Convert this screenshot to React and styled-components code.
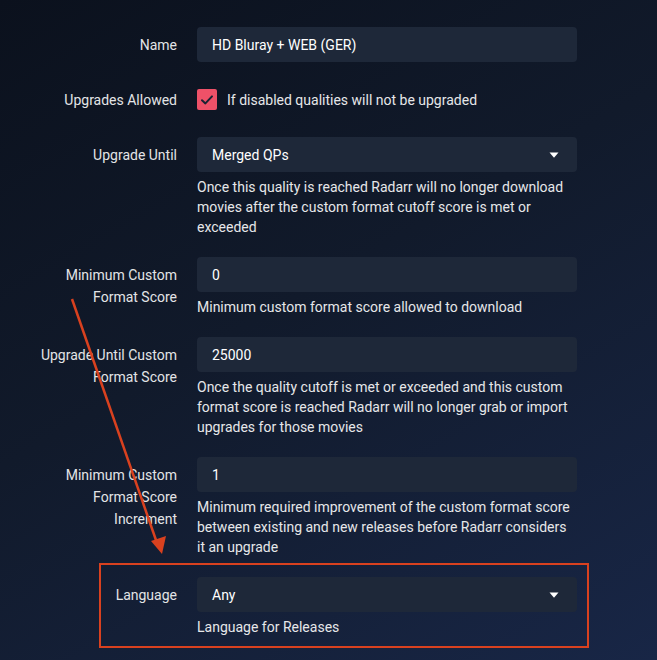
import React from "react";
import styled, { createGlobalStyle } from "styled-components";

const Global = createGlobalStyle`
  html, body { margin: 0; padding: 0; }
  body {
    background: linear-gradient(150deg, #0b111d 0%, #111a2b 45%, #182646 100%);
    min-height: 660px;
    font-family: Roboto, "Noto Sans", sans-serif;
    -webkit-font-smoothing: antialiased;
  }
`;

const Page = styled.div`
  position: relative;
  width: 657px;
  height: 660px;
  overflow: hidden;
  box-sizing: border-box;
  padding-top: 27px;
`;

const Form = styled.div`
  display: flex;
  flex-direction: column;
  gap: 20px;
`;

const Row = styled.div`
  position: relative;
  display: grid;
  grid-template-columns: 177px 380px;
  column-gap: 20px;
  align-items: start;
`;

const Label = styled.div`
  text-align: right;
  color: #e3e4e6;
  font-size: 14px;
  line-height: 22px;
  padding-top: 7px;
`;

const Control = styled.div`
  display: flex;
  flex-direction: column;
`;

const Field = styled.div`
  height: 35px;
  box-sizing: border-box;
  background: #1e2839;
  border-radius: 4px;
  display: flex;
  align-items: center;
  justify-content: space-between;
  padding: 0 18px 0 15px;
  color: #ffffff;
  font-size: 14px;
`;

const Help = styled.div`
  margin-top: 5px;
  color: #e6e7e9;
  font-size: 14px;
  line-height: 20px;
`;

const CheckRow = styled.div`
  height: 35px;
  display: flex;
  align-items: center;
  gap: 10px;
  color: #e6e7e9;
  font-size: 14px;
`;

const Box = styled.div`
  width: 20px;
  height: 21px;
  border-radius: 2px;
  background: #ee5168;
  display: flex;
  align-items: center;
  justify-content: center;
`;

const Highlight = styled.div`
  position: absolute;
  left: 99px;
  top: -14px;
  width: 490px;
  height: 85px;
  box-sizing: border-box;
  border: 2.5px solid #d9411f;
  pointer-events: none;
`;

const Arrow = styled.svg`
  position: absolute;
  left: 0;
  top: 0;
  pointer-events: none;
`;

const Caret = () => (
  <svg width="10" height="6" viewBox="0 0 10 6">
    <path d="M0.5 0.5 H9.5 L5 5.8 Z" fill="#ffffff" />
  </svg>
);

const Check = () => (
  <svg width="14" height="12" viewBox="0 0 14 12">
    <path d="M2 6.2 L5.4 9.4 L12 2.4" fill="none" stroke="#1b2333" strokeWidth="2" strokeLinecap="round" strokeLinejoin="round" />
  </svg>
);

export default function App() {
  return (
    <>
      <Global />
      <Page>
        <Form>
          <Row>
            <Label>Name</Label>
            <Control>
              <Field>HD Bluray + WEB (GER)</Field>
            </Control>
          </Row>
          <Row>
            <Label>Upgrades Allowed</Label>
            <Control>
              <CheckRow>
                <Box><Check /></Box>
                If disabled qualities will not be upgraded
              </CheckRow>
            </Control>
          </Row>
          <Row>
            <Label>Upgrade Until</Label>
            <Control>
              <Field>Merged QPs<Caret /></Field>
              <Help>Once this quality is reached Radarr will no longer download movies after the custom format cutoff score is met or exceeded</Help>
            </Control>
          </Row>
          <Row>
            <Label>Minimum Custom<br />Format Score</Label>
            <Control>
              <Field>0</Field>
              <Help>Minimum custom format score allowed to download</Help>
            </Control>
          </Row>
          <Row>
            <Label>Upgrade Until Custom<br />Format Score</Label>
            <Control>
              <Field>25000</Field>
              <Help>Once the quality cutoff is met or exceeded and this custom format score is reached Radarr will no longer grab or import upgrades for those movies</Help>
            </Control>
          </Row>
          <Row>
            <Label>Minimum Custom<br />Format Score<br />Increment</Label>
            <Control>
              <Field>1</Field>
              <Help>Minimum required improvement of the custom format score between existing and new releases before Radarr considers it an upgrade</Help>
            </Control>
          </Row>
          <Row>
            <Label>Language</Label>
            <Control>
              <Field>Any<Caret /></Field>
              <Help>Language for Releases</Help>
            </Control>
            <Highlight />
          </Row>
        </Form>
        <Arrow width="657" height="660" viewBox="0 0 657 660">
          <line x1="72" y1="299" x2="157" y2="543" stroke="#d9411f" strokeWidth="2.5" />
          <path d="M151 541 L166 536 L162 554 Z" fill="#d9411f" />
        </Arrow>
      </Page>
    </>
  );
}
